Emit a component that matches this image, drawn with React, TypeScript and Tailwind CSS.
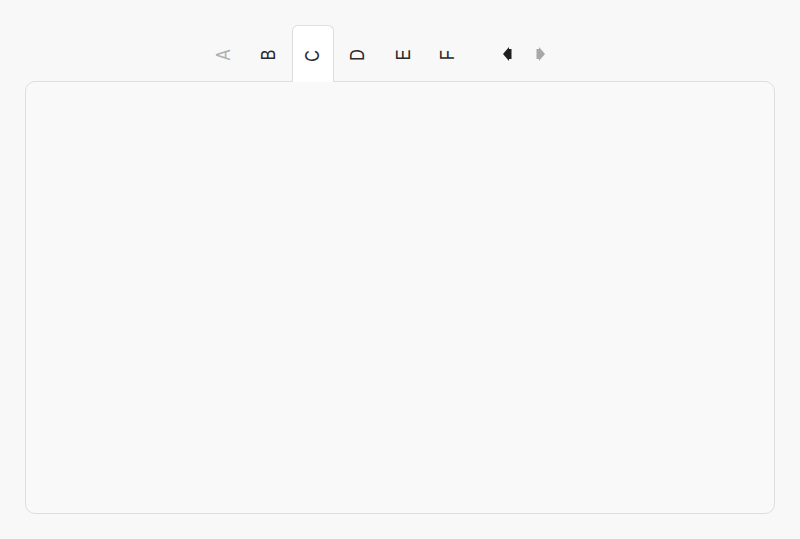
import React from "react";

const tabs = ["A", "B", "C", "D", "E", "F"];

export default function App() {
  return (
    <div className="h-[539px] w-[800px] bg-[#f8f8f8] px-[25px] pt-[25px] font-['Liberation_Sans',Arial,sans-serif]">
      <div className="flex h-[57px] items-stretch pl-[177px] -mb-px relative z-10">
        {tabs.map((t) => {
          const active = t === "C";
          const disabled = t === "A";
          return (
            <div
              key={t}
              className={
                "w-[42px] mr-[3px] pt-[3px] flex items-center justify-center rounded-t-[6px] " +
                (active ? "bg-white border border-b-0 border-[#dedede]" : "")
              }
            >
              <span
                className={
                  "block [transform:rotate(-90deg)_scaleY(1.3)] text-[16px] leading-none " +
                  (disabled ? "text-[#b0b0b0]" : "text-[#2a2a2a]")
                }
              >
                {t}
              </span>
            </div>
          );
        })}
        <div className="ml-[31px] flex items-center gap-[24px] pt-[1px]">
          <svg width="9" height="14" viewBox="0 0 9 14" className="block w-[9px] h-[14px]">
            <polygon points="0,7 6,0 6,14" fill="#1f1f1f" />
            <rect x="5.5" y="2" width="3" height="10" fill="#1f1f1f" />
          </svg>
          <svg width="9" height="14" viewBox="0 0 9 14" className="block w-[9px] h-[14px]">
            <rect x="0.5" y="2" width="3" height="10" fill="#a8a8a8" />
            <polygon points="9,7 3,0 3,14" fill="#a8a8a8" />
          </svg>
        </div>
      </div>
      <div className="h-[433px] w-[750px] rounded-[10px] border border-[#dedede] bg-[#f9f9f9]" />
    </div>
  );
}
